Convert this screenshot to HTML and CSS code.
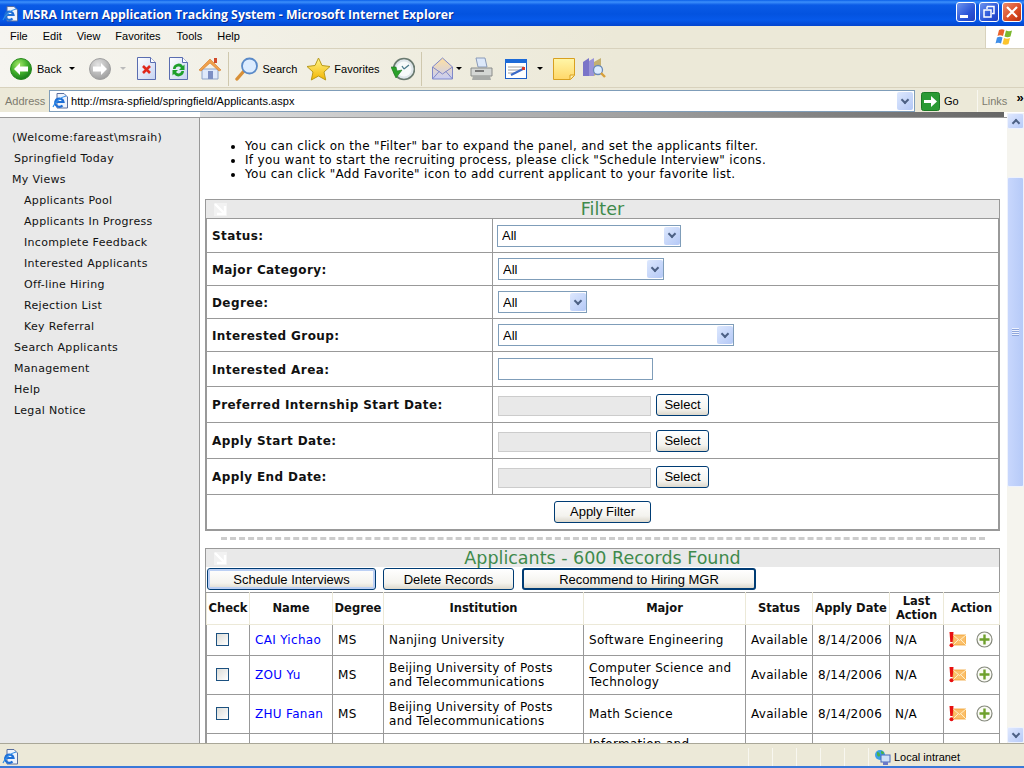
FILE: index.html
```html
<!DOCTYPE html>
<html lang="en">
<head>
    <meta charset="UTF-8">
    <title>MSRA Intern Application Tracking System - Microsoft Internet Explorer</title>
    <link rel="stylesheet" href="styles.css">
</head>
<body>
    <svg class="defs" width="0" height="0">
        <defs>
            <radialGradient id="gGreen" cx="40%" cy="30%" r="75%"><stop offset="0" stop-color="#a6e86a"/><stop offset="0.55" stop-color="#3fae2a"/><stop offset="1" stop-color="#12761a"/></radialGradient>
            <radialGradient id="gGray" cx="40%" cy="30%" r="75%"><stop offset="0" stop-color="#e4e4e4"/><stop offset="1" stop-color="#9a9a9a"/></radialGradient>
            <linearGradient id="gDoc" x1="0" y1="0" x2="1" y2="1"><stop offset="0" stop-color="#ffffff"/><stop offset="1" stop-color="#c6d3f2"/></linearGradient>
            <linearGradient id="gNote" x1="0" y1="0" x2="0" y2="1"><stop offset="0" stop-color="#fff6a8"/><stop offset="1" stop-color="#ffd76a"/></linearGradient>
            <linearGradient id="gStar" x1="0" y1="0" x2="0" y2="1"><stop offset="0" stop-color="#fff78c"/><stop offset="1" stop-color="#f4b400"/></linearGradient>
            <linearGradient id="gMail" x1="0" y1="0" x2="0" y2="1"><stop offset="0" stop-color="#ffe0a0"/><stop offset="1" stop-color="#c8cdf5"/></linearGradient>
            <symbol id="ie" viewBox="0 0 16 16">
                <path d="M5 .5h7l3.500 3.500v11H5z" fill="#eef3fc" stroke="#5a6f9e"/>
                <path d="M3.500 9h8A4.200 4.200 0 1 0 10.500 12.500" fill="none" stroke="#1f6fd6" stroke-width="2.200"/>
                <path d="M1 14C3 9 9 4 14 3" fill="none" stroke="#2c8be8" stroke-width="1.100"/>
            </symbol>
            <symbol id="warnmail" viewBox="0 0 18 17">
                <rect x="5" y="4" width="13" height="10" fill="#fbbf6a" stroke="#f0a030" stroke-width="0.800"/>
                <path d="M5 4l6.500 5.500L18 4M5 14l5-5M18 14l-5-5" fill="none" stroke="#fff0c8"/>
                <path d="M1.500 1h4l-.8 10H2.300z" fill="#e81010"/>
                <circle cx="3.500" cy="14.300" r="2" fill="#e81010"/>
            </symbol>
            <symbol id="plus" viewBox="0 0 17 17">
                <circle cx="8.500" cy="8.500" r="7.500" fill="#fbfbf6" stroke="#85897c" stroke-width="1.200"/>
                <path d="M8.500 3.500v10M3.500 8.500h10" stroke="#6ea02c" stroke-width="2.400"/>
            </symbol>
        </defs>
    </svg>

    <div class="window">
        <div class="titlebar">
            <svg class="title-icon" width="16" height="16"><use href="#ie"/></svg>
            <span class="title-text">MSRA Intern Application Tracking System - Microsoft Internet Explorer</span>
            <div class="win-buttons">
                <span class="win-btn"><span class="glyph-min"></span></span>
                <span class="win-btn">
                    <svg width="14" height="14" viewBox="0 0 14 14"><path d="M5 1.500h7v7H10M5 1.500V4M2 5h7v7H2z" fill="none" stroke="#fff" stroke-width="1.500"/></svg>
                </span>
                <span class="win-btn close">
                    <svg width="14" height="14" viewBox="0 0 14 14"><path d="M2 2l10 10M12 2L2 12" stroke="#fff" stroke-width="2.200"/></svg>
                </span>
            </div>
        </div>

        <div class="menubar">
            <span class="menu-file">File</span>
            <span class="menu-edit">Edit</span>
            <span class="menu-view">View</span>
            <span class="menu-fav">Favorites</span>
            <span class="menu-tools">Tools</span>
            <span class="menu-help">Help</span>
            <div class="flag">
                <svg width="20" height="18" viewBox="0 0 20 18">
                    <path d="M4 2c2-1 4-1 5.500 0L8 8C6 7 4 7 2.500 8z" fill="#e8622c"/>
                    <path d="M11 2.500c2 1 4 1 6 0L15.500 8.500c-2 1-4 1-6 0z" fill="#7cb82f"/>
                    <path d="M2 9.500c2-1 4-1 5.500 0L6 15.500c-2-1-4-1-5.500 0z" fill="#3f8ee8"/>
                    <path d="M9 10c2 1 4 1 6 0L13.500 16c-2 1-4 1-6 0z" fill="#fcc42c"/>
                </svg>
            </div>
        </div>

        <div class="toolbar">
            <svg class="ic-back" width="22" height="22" viewBox="0 0 22 22"><circle cx="11" cy="11" r="10.500" fill="url(#gGreen)" stroke="#2a8a20"/><path d="M4 11l6-6v3.500h8v5h-8V17z" fill="#fff"/></svg>
            <span class="tb-label label-back">Back</span>
            <span class="caret caret-back"></span>
            <svg class="ic-forward" width="22" height="22" viewBox="0 0 22 22"><circle cx="11" cy="11" r="10.500" fill="url(#gGray)" stroke="#a0a0a0"/><path d="M18 11l-6-6v3.500H4v5h8V17z" fill="#fff"/></svg>
            <span class="caret caret-forward"></span>
            <svg class="ic-stop" width="19" height="23" viewBox="0 0 19 23"><path d="M.5.500h13l5 5v17H.5z" fill="url(#gDoc)" stroke="#5a6db0"/><path d="M13.500.500v5h5" fill="#fff" stroke="#5a6db0"/><path d="M6 9l7 7M13 9l-7 7" stroke="#e0281c" stroke-width="2.600"/></svg>
            <svg class="ic-refresh" width="19" height="23" viewBox="0 0 19 23"><path d="M.5.500h13l5 5v17H.5z" fill="url(#gDoc)" stroke="#5a6db0"/><path d="M13.500.500v5h5" fill="#fff" stroke="#5a6db0"/><path d="M4 12a5.500 5.500 0 0 1 10-3l1.500-1.500V13H10l2-2a3 3 0 0 0-5.500 1zM15 14a5.500 5.500 0 0 1-10 3l-1.500 1.500V13H9l-2 2a3 3 0 0 0 5.500-1z" fill="#1fa02c"/></svg>
            <svg class="ic-home" width="24" height="24" viewBox="0 0 24 24"><path d="M4 12h16v10H4z" fill="#dfe9fb" stroke="#8ea4c8"/><path d="M1 13L12 2l11 11-2 1-9-8-9 8z" fill="#f0a04a" stroke="#d07a28" stroke-width="0.600"/><rect x="10" y="14" width="5" height="8" fill="#7c8fc4"/><rect x="16" y="1" width="3" height="5" fill="#d04a2a"/></svg>
            <span class="tb-sep sep-one"></span>
            <svg class="ic-search" width="24" height="24" viewBox="0 0 24 24"><path d="M9 14L2 22" stroke="#d89038" stroke-width="3.400" stroke-linecap="round"/><circle cx="14.500" cy="9" r="7.500" fill="#dcecff" stroke="#5a8ac8" stroke-width="1.800"/></svg>
            <span class="tb-label label-search">Search</span>
            <svg class="ic-star" width="25" height="24" viewBox="0 0 25 24"><path d="M12.500 1l3.500 7.500 8 1-6 5.500 1.700 8-7.200-4-7.200 4L7 15 1 9.500l8-1z" fill="url(#gStar)" stroke="#b89a1c"/></svg>
            <span class="tb-label label-fav">Favorites</span>
            <svg class="ic-history" width="24" height="24" viewBox="0 0 24 24"><circle cx="13" cy="12" r="10.500" fill="#dfe6ea" stroke="#6a7a70" stroke-width="1.600"/><circle cx="13" cy="12" r="7.500" fill="#f7fafa"/><path d="M13 12l5-4M13 12l-2-3" stroke="#4a7a8a" stroke-width="1.300"/><path d="M0 10h5l1 4 5-1-6 8z" fill="#2aa02a" stroke="#1c7a1c" stroke-width="0.600"/></svg>
            <span class="tb-sep sep-two"></span>
            <svg class="ic-mail" width="21" height="23" viewBox="0 0 21 23"><path d="M.5 10L10.500 1l10 9v12H.5z" fill="url(#gMail)" stroke="#8088c8"/><path d="M.5 10l10 7 10-7M.5 22l7-8M20.500 22l-7-8" fill="none" stroke="#8088c8"/></svg>
            <span class="caret caret-mail"></span>
            <svg class="ic-print" width="23" height="24" viewBox="0 0 23 24"><path d="M6 1h9l2 9H8z" fill="#dce8fa" stroke="#8a9ab8"/><path d="M1 11h21v8H1z" fill="#d4d6d4" stroke="#8a8c8a"/><path d="M3 19h17l1 4H2z" fill="#a8aaa8"/><rect x="5" y="13" width="9" height="2" fill="#777"/></svg>
            <svg class="ic-edit" width="22" height="20" viewBox="0 0 22 20"><rect x=".5" y=".5" width="21" height="19" fill="#fff" stroke="#1c5ec8"/><rect x="0" y="0" width="22" height="4" fill="#1c6ad8"/><path d="M3 8h16M3 11h12M3 14h8" stroke="#a0a0a0"/><path d="M6 16l12-6" stroke="#3a6ac8" stroke-width="2"/><rect x="17" y="8" width="3" height="3" fill="#d83a2a"/></svg>
            <span class="caret caret-edit"></span>
            <svg class="ic-note" width="22" height="22" viewBox="0 0 22 22"><path d="M.5.500h21v17l-4 4H.5z" fill="url(#gNote)" stroke="#d8a020"/><path d="M21 17h-4v4" fill="#fff0b0" stroke="#d8a020"/></svg>
            <svg class="ic-research" width="24" height="23" viewBox="0 0 24 23"><path d="M1 5l6-4v18H1z" fill="#7a74c8"/><path d="M7 4l5-3v18H7z" fill="#9a94d8"/><path d="M12 5l7-4v14l-7 4z" fill="#c4b070"/><circle cx="16" cy="13" r="4.500" fill="#dcecff" stroke="#6a8ab8" stroke-width="1.300"/><path d="M19 16l4 4" stroke="#d8a038" stroke-width="2.400"/></svg>
        </div>

        <div class="addressbar">
            <span class="address-label">Address</span>
            <div class="address-box">
                <svg class="address-icon" width="16" height="16"><use href="#ie"/></svg>
                <span class="address-url">http://msra-spfield/springfield/Applicants.aspx</span>
                <span class="drop-btn address-drop"><span class="chev"></span></span>
            </div>
            <svg class="go-icon" width="19" height="19" viewBox="0 0 19 19"><rect x=".5" y=".5" width="18" height="18" rx="2" fill="#2a9a34" stroke="#1c7a24"/><path d="M3 8h7V4l6 5.500-6 5.500v-4H3z" fill="#fff"/></svg>
            <span class="go-label">Go</span>
            <span class="links-label">Links</span>
            <span class="links-more">&raquo;</span>
        </div>

        <div class="viewport">
            <div class="view-left">
                <div class="band"></div>
                <div class="columns">
                    <nav class="sidebar">
                        <a class="nav-welcome">(Welcome:fareast\msraih)</a>
                        <a>Springfield Today</a>
                        <a class="nav-welcome">My Views</a>
                        <a class="nav-sub">Applicants Pool</a>
                        <a class="nav-sub">Applicants In Progress</a>
                        <a class="nav-sub">Incomplete Feedback</a>
                        <a class="nav-sub">Interested Applicants</a>
                        <a class="nav-sub">Off-line Hiring</a>
                        <a class="nav-sub">Rejection List</a>
                        <a class="nav-sub">Key Referral</a>
                        <a>Search Applicants</a>
                        <a>Management</a>
                        <a>Help</a>
                        <a>Legal Notice</a>
                    </nav>

                    <main class="page">
                        <ul class="tips">
                            <li>You can click on the "Filter" bar to expand the panel, and set the applicants filter.</li>
                            <li>If you want to start the recruiting process, please click "Schedule Interview" icons.</li>
                            <li>You can click "Add Favorite" icon to add current applicant to your favorite list.</li>
                        </ul>

                        <section class="panel">
                            <div class="panel-head">
                                <svg class="collapse-icon" width="13" height="13" viewBox="0 0 13 13"><rect width="13" height="13" fill="#f2f2f2"/><path d="M1 1l9 9M11 3v8H3" fill="none" stroke="#fff" stroke-width="2.400"/></svg>
                                <span>Filter</span>
                            </div>
                            <table class="filter-table">
                                <tr class="h34"><th>Status:</th><td><label class="select w-status"><select><option>All</option></select><span class="drop-btn"><span class="chev"></span></span></label></td></tr>
                                <tr class="h33"><th>Major Category:</th><td><label class="select w-major"><select><option>All</option></select><span class="drop-btn"><span class="chev"></span></span></label></td></tr>
                                <tr class="h33"><th>Degree:</th><td><label class="select w-degree"><select><option>All</option></select><span class="drop-btn"><span class="chev"></span></span></label></td></tr>
                                <tr class="h33"><th>Interested Group:</th><td><label class="select w-group"><select><option>All</option></select><span class="drop-btn"><span class="chev"></span></span></label></td></tr>
                                <tr class="h35"><th>Interested Area:</th><td><input class="text-input" type="text"></td></tr>
                                <tr class="h36"><th>Preferred Internship Start Date:</th><td><div class="date-field"><input class="date-input" type="text" disabled><button class="xp-btn btn-select">Select</button></div></td></tr>
                                <tr class="h36"><th>Apply Start Date:</th><td><div class="date-field"><input class="date-input" type="text" disabled><button class="xp-btn btn-select">Select</button></div></td></tr>
                                <tr class="h36"><th>Apply End Date:</th><td><div class="date-field"><input class="date-input" type="text" disabled><button class="xp-btn btn-select">Select</button></div></td></tr>
                                <tr class="h35"><td class="apply-cell" colspan="2"><button class="xp-btn btn-apply">Apply Filter</button></td></tr>
                            </table>
                        </section>

                        <div class="divider"></div>

                        <section class="panel">
                            <div class="panel-head">
                                <svg class="collapse-icon" width="13" height="13" viewBox="0 0 13 13"><rect width="13" height="13" fill="#f2f2f2"/><path d="M1 1l9 9M11 3v8H3" fill="none" stroke="#fff" stroke-width="2.400"/></svg>
                                <span>Applicants - 600 Records Found</span>
                            </div>
                            <div class="actions">
                                <button class="xp-btn btn-schedule">Schedule Interviews</button>
                                <button class="xp-btn btn-delete">Delete Records</button>
                                <button class="xp-btn btn-recommend">Recommend to Hiring MGR</button>
                            </div>
                            <table class="grid">
                                <colgroup>
                                    <col class="c-check"><col class="c-name"><col class="c-degree"><col class="c-inst"><col class="c-major"><col class="c-status"><col class="c-date"><col class="c-last"><col class="c-action">
                                </colgroup>
                                <thead>
                                    <tr><th>Check</th><th>Name</th><th>Degree</th><th>Institution</th><th>Major</th><th>Status</th><th>Apply Date</th><th>Last Action</th><th>Action</th></tr>
                                </thead>
                                <tbody>
                                    <tr class="r31">
                                        <td class="cell-check"><input type="checkbox"></td>
                                        <td><a class="name-link">CAI Yichao</a></td><td>MS</td><td class="cell-inst">Nanjing University</td><td>Software Engineering</td><td>Available</td><td>8/14/2006</td><td>N/A</td>
                                        <td class="cell-action"><svg width="18" height="17"><use href="#warnmail"/></svg><svg class="plus-icon" width="17" height="17"><use href="#plus"/></svg></td>
                                    </tr>
                                    <tr class="r39">
                                        <td class="cell-check"><input type="checkbox"></td>
                                        <td><a class="name-link">ZOU Yu</a></td><td>MS</td><td class="cell-inst">Beijing University of Posts and Telecommunications</td><td>Computer Science and Technology</td><td>Available</td><td>8/14/2006</td><td>N/A</td>
                                        <td class="cell-action"><svg width="18" height="17"><use href="#warnmail"/></svg><svg class="plus-icon" width="17" height="17"><use href="#plus"/></svg></td>
                                    </tr>
                                    <tr class="r39">
                                        <td class="cell-check"><input type="checkbox"></td>
                                        <td><a class="name-link">ZHU Fanan</a></td><td>MS</td><td class="cell-inst">Beijing University of Posts and Telecommunications</td><td>Math Science</td><td>Available</td><td>8/14/2006</td><td>N/A</td>
                                        <td class="cell-action"><svg width="18" height="17"><use href="#warnmail"/></svg><svg class="plus-icon" width="17" height="17"><use href="#plus"/></svg></td>
                                    </tr>
                                    <tr class="r50">
                                        <td></td><td></td><td></td><td></td><td>Information and Communication Engineering</td><td></td><td></td><td></td><td></td>
                                    </tr>
                                </tbody>
                            </table>
                        </section>
                    </main>
                </div>
            </div>

            <div class="scrollbar">
                <span class="sb-btn"><span class="chev chev-up"></span></span>
                <span class="sb-track sb-top"></span>
                <span class="sb-thumb"><span class="grip"></span></span>
                <span class="sb-track sb-rest"></span>
                <span class="sb-btn"><span class="chev"></span></span>
            </div>
        </div>

        <div class="statusbar">
            <svg class="status-ie" width="16" height="16"><use href="#ie"/></svg>
            <div class="status-cells">
                <span class="status-cell"></span><span class="status-cell"></span><span class="status-cell"></span><span class="status-cell"></span><span class="status-cell"></span>
            </div>
            <div class="status-zone">
                <svg width="17" height="17" viewBox="0 0 17 17"><circle cx="6" cy="6" r="5" fill="#3aa0e8"/><path d="M3 3c2 0 3 1 3 3S4 8 3 6zM7 2c2 0 3 1 3 2S8 6 7 4z" fill="#4ab04a"/><rect x="7" y="6" width="9" height="7" fill="#cfe0f8" stroke="#4a6ab8"/><rect x="9" y="13" width="5" height="3" fill="#6a7ac8"/></svg>
                <span>Local intranet</span>
            </div>
        </div>
    </div>
</body>
</html>
```
FILE: styles.css
```css
/* XP window chrome + page */
* {
    box-sizing: border-box;
}
html, body {
    margin: 0;
    padding: 0;
    height: 100%;
    overflow: hidden;
}
body {
    font-family: "DejaVu Sans", Verdana, sans-serif;
    font-size: 11px;
    color: #000;
    background-color: #fff;
}
.defs {
    position: absolute;
}
.window {
    display: flex;
    flex-direction: column;
    width: 1024px;
    height: 768px;
}

/* title bar */
.titlebar {
    display: flex;
    align-items: center;
    flex: 0 0 26px;
    padding: 2px 2px 0 2px;
    background: linear-gradient(#0a5fe8 0, #3c8ffb 2px, #0a5be6 5px, #0353e0 14px, #0659ea 20px, #0345cf 26px);
}
.title-text {
    margin-left: 4px;
    font-family: "Open Sans", sans-serif;
    font-weight: 700;
    font-size: 12.3px;
    color: #fff;
    text-shadow: 1px 1px 0 #0a2a90;
    white-space: nowrap;
}
.win-buttons {
    display: flex;
    align-self: flex-start;
    gap: 3px;
    margin: 0 0 0 auto;
}
.win-btn {
    display: flex;
    align-items: center;
    justify-content: center;
    width: 20px;
    height: 20px;
    border: 1px solid #fff;
    border-radius: 3px;
    background: linear-gradient(135deg, #6e94ee, #2a55d8 60%, #2040c0);
}
.win-btn.close {
    background: linear-gradient(135deg, #ec8a6c, #d94a22 60%, #b83010);
}
.glyph-min {
    align-self: flex-end;
    width: 8px;
    height: 3px;
    margin: 0 4px 3px 0;
    background-color: #fff;
}

/* menu */
.menubar {
    display: flex;
    align-items: center;
    flex: 0 0 23px;
    padding-bottom: 3px;
    border-bottom: 1px solid #d8d2bd;
    font-family: "Liberation Sans", Arial, sans-serif;
    font-size: 11px;
    background: linear-gradient(90deg, #f6f5f0, #ece9d8 60%);
}
.menu-file { margin-left: 10px; }
.menu-edit { margin-left: 15px; }
.menu-view { margin-left: 15px; }
.menu-fav { margin-left: 15px; }
.menu-tools { margin-left: 16px; }
.menu-help { margin-left: 15px; }
.flag {
    display: flex;
    align-items: center;
    justify-content: center;
    width: 39px;
    height: 22px;
    margin: 0 0 -3px auto;
    border-left: 1px solid #d8d2bd;
    background-color: #fff;
}

/* toolbar */
.toolbar {
    display: flex;
    align-items: center;
    flex: 0 0 39px;
    padding: 1px 0 0 10px;
    font-family: "Liberation Sans", Arial, sans-serif;
    font-size: 11px;
    border-bottom: 1px solid #d8d2bd;
    background: linear-gradient(90deg, #f6f5f0, #ece9d8 60%);
}
.tb-label { white-space: nowrap; }
.tb-sep {
    width: 1px;
    height: 34px;
    background-color: #cfc8ae;
}
.caret {
    width: 0;
    height: 0;
    border-left: 3px solid transparent;
    border-right: 3px solid transparent;
    border-top: 3px solid #000;
}
.label-back { margin-left: 5px; }
.caret-back { margin-left: 8px; }
.ic-forward { margin-left: 14px; }
.caret-forward { margin-left: 9px; border-top-color: #bbb; }
.ic-stop { margin-left: 11px; }
.ic-refresh { margin-left: 13px; }
.ic-home { margin-left: 10px; }
.sep-one { margin-left: 6px; }
.ic-search { margin-left: 6px; }
.label-search { margin-left: 3px; }
.ic-star { margin-left: 9px; }
.label-fav { margin-left: 3px; }
.ic-history { margin-left: 11px; }
.sep-two { margin-left: 6px; }
.ic-mail { margin-left: 10px; }
.caret-mail { margin-left: 3px; }
.ic-print { margin-left: 8px; }
.ic-edit { margin-left: 12px; }
.caret-edit { margin-left: 10px; }
.ic-note { margin-left: 10px; }
.ic-research { margin-left: 7px; }

/* address bar */
.addressbar {
    display: flex;
    align-items: center;
    flex: 0 0 24px;
    padding: 2px 0 0 5px;
    font-family: "Liberation Sans", Arial, sans-serif;
    font-size: 11px;
    background-color: #ece9d8;
}
.addressbar > * {
    flex-shrink: 0;
}
.address-label {
    width: 44px;
    color: #7d7b6e;
}
.address-box {
    display: flex;
    align-items: center;
    width: 866px;
    height: 22px;
    padding: 0 1px 0 2px;
    border: 1px solid #7f9db9;
    background-color: #fff;
}
.address-url {
    margin-left: 3px;
    letter-spacing: 0.06px;
}
.drop-btn {
    display: flex;
    align-items: center;
    justify-content: center;
    flex: 0 0 16px;
    width: 16px;
    height: 18px;
    border-radius: 2px;
    background: linear-gradient(135deg, #dde8fe, #b4c8f6);
}
.address-drop {
    margin-left: auto;
}
.chev {
    width: 6px;
    height: 6px;
    margin-top: -3px;
    border-right: 2px solid #4d6185;
    border-bottom: 2px solid #4d6185;
    transform: rotate(45deg);
}
.chev-up {
    margin-top: 3px;
    transform: rotate(225deg);
}
.go-icon {
    margin-left: 6px;
}
.go-label {
    margin-left: 4px;
}
.links-label {
    margin-left: 18px;
    padding-left: 4px;
    border-left: 1px solid #f8f7f0;
    line-height: 22px;
    color: #7d7b6e;
}
.links-more {
    margin: -8px 0 0 9px;
    font-size: 13px;
    font-weight: 700;
}

/* page area */
.viewport {
    display: flex;
    flex: 1;
    min-height: 0;
}
.view-left {
    display: flex;
    flex-direction: column;
    flex: 0 0 1007px;
    min-height: 0;
}
.band {
    flex: 0 0 6px;
    background: linear-gradient(90deg, #fff 0, #fff 200px, #e2e2e2 200px, #666 1004px, #fff 1004px);
    background-size: 100% 5px;
    background-repeat: no-repeat;
    border-bottom: 1px solid #999;
}
.columns {
    display: flex;
    flex: 1;
    min-height: 0;
    overflow: hidden;
}
.sidebar {
    display: flex;
    flex-direction: column;
    flex: 0 0 200px;
    padding: 9px 0 0 14px;
    border-right: 1px solid #999;
    background-color: #e9e9e9;
}
.sidebar a {
    line-height: 21px;
    letter-spacing: 0.32px;
    color: #111;
}
.sidebar a.nav-welcome { margin-left: -2px; }
.sidebar a.nav-sub { margin-left: 10px; }

.page {
    flex: 0 0 807px;
    padding: 0 7px 0 5px;
    overflow: hidden;
}
.tips {
    margin: 21px 0 18px;
    padding-left: 40px;
    line-height: 14px;
    font-size: 12px;
    letter-spacing: 0.3px;
}
.panel {
    border: 1px solid #999;
    border-bottom: none;
}
.panel-head {
    position: relative;
    height: 18px;
    text-align: center;
    font-size: 17.5px;
    line-height: 19px;
    color: #3f8a4c;
    background-color: #e9e9e9;
}
.collapse-icon {
    position: absolute;
    left: 8px;
    top: 3px;
}

/* filter */
.filter-table {
    width: 100%;
    border-collapse: collapse;
    table-layout: fixed;
    border: 1px solid #999;
    border-bottom-width: 2px;
}
.filter-table th, .filter-table td {
    padding: 0 5px;
    border: 1px solid #999;
    text-align: left;
}
.filter-table th {
    width: 286px;
    padding-top: 1px;
    font-size: 12px;
    font-weight: 700;
    letter-spacing: 0.4px;
    color: #111;
}
.h33 { height: 33px; }
.h34 { height: 34px; }
.h35 { height: 35px; }
.h36 { height: 36px; }
.select {
    position: relative;
    display: block;
    height: 22px;
}
.select select {
    appearance: none;
    display: block;
    width: 100%;
    height: 100%;
    padding-left: 4px;
    border: 1px solid #7f9db9;
    border-radius: 0;
    background-color: #fff;
    font-family: "Liberation Sans", Arial, sans-serif;
    font-size: 13px;
}
.select .drop-btn {
    position: absolute;
    right: 1px;
    top: 2px;
}
.w-status { width: 184px; margin-left: -1px; }
.w-major { width: 166px; }
.w-degree { width: 89px; }
.w-group { width: 236px; }
.text-input {
    display: block;
    width: 155px;
    height: 22px;
    border: 1px solid #7f9db9;
}
.date-field {
    display: flex;
    align-items: center;
    gap: 5px;
}
.date-input {
    width: 153px;
    height: 20px;
    margin-top: 3px;
    border: 1px solid #ccc;
    background-color: #e9e9e9;
}
.xp-btn {
    padding: 0;
    border: 1px solid #003c74;
    border-radius: 3px;
    background: linear-gradient(#fff, #f4f3ee 70%, #dcd8cc);
    font-family: "Liberation Sans", Arial, sans-serif;
    font-size: 13px;
    color: #000;
}
.btn-select {
    width: 53px;
    height: 22px;
}
.apply-cell {
    text-align: center !important;
}
.btn-apply {
    width: 97px;
    height: 22px;
}
.divider {
    height: 4px;
    margin: 6px 15px 7px 16px;
    border-top: 3px dashed #ccc;
}

/* applicants */
.actions {
    display: flex;
    align-items: center;
    height: 25px;
    padding: 0 0 0 1px;
}
.btn-schedule {
    width: 169px;
    height: 22px;
    box-shadow: inset 0 0 0 2px #bcd0f4;
}
.btn-delete {
    width: 131px;
    height: 22px;
    margin-left: 7px;
}
.btn-recommend {
    width: 234px;
    height: 22px;
    margin-left: 8px;
    border-width: 2px;
}
.grid {
    width: 100%;
    border-collapse: collapse;
    table-layout: fixed;
    border: 1px solid #999;
    font-size: 12px;
    letter-spacing: 0.3px;
}
.c-check { width: 43px; }
.c-name { width: 83px; }
.c-degree { width: 51px; }
.c-inst { width: 200px; }
.c-major { width: 162px; }
.c-status { width: 67px; }
.c-date { width: 77px; }
.c-last { width: 54px; }
.c-action { width: 56px; }
.grid th {
    height: 32px;
    padding: 0;
    border: 1px solid #ece9d8;
    border-top-color: #999;
    text-align: center;
    font-size: 11.5px;
    font-weight: 700;
    line-height: 14px;
    letter-spacing: 0;
    color: #111;
}
.grid td {
    padding: 0 5px;
    border: 1px solid #999;
    line-height: 14px;
    vertical-align: middle;
}
.grid td.cell-inst {
    padding-right: 14px;
}
.r31 { height: 31px; }
.r39 { height: 39px; }
.r50 { height: 50px; }
.name-link {
    color: #0000ff;
}
.cell-check {
    text-align: center;
}
.cell-check input {
    appearance: none;
    display: block;
    width: 13px;
    height: 13px;
    margin: 0 0 0 4px;
    border: 1px solid #1c5180;
    background: linear-gradient(135deg, #dcdcd7, #fff);
}
.grid td.cell-action {
    padding: 0 0 0 4px;
}
.cell-action svg {
    vertical-align: middle;
}
.plus-icon {
    margin-left: 10px;
}

/* scrollbar */
.scrollbar {
    display: flex;
    flex-direction: column;
    flex: 0 0 17px;
    margin-top: 1px;
    background-color: #f5f4ee;
}
.sb-btn {
    display: flex;
    align-items: center;
    justify-content: center;
    flex: 0 0 16px;
    border: 1px solid #eef2fd;
    border-radius: 2px;
    background: linear-gradient(135deg, #dfe8fe, #b8cbf8);
}
.sb-top {
    flex: 0 0 48px;
}
.sb-thumb {
    display: flex;
    align-items: center;
    justify-content: center;
    flex: 0 0 310px;
    border: 1px solid #eef2fd;
    border-radius: 2px;
    background: linear-gradient(90deg, #c8d7fd, #b6caf8);
}
.grip {
    width: 7px;
    height: 8px;
    background: repeating-linear-gradient(#eef2fd 0 1px, #8ea6dc 1px 2px);
}
.sb-rest {
    flex: 1;
}

/* status bar */
.statusbar {
    display: flex;
    align-items: center;
    flex: 0 0 22px;
    padding: 4px 0 0 2px;
    border-top: 1px solid #a9a798;
    border-bottom: 2px solid #3a78d8;
    font-family: "Liberation Sans", Arial, sans-serif;
    font-size: 11px;
    background-color: #ece9d8;
}
.status-cells {
    display: flex;
    margin-left: auto;
}
.status-cell {
    width: 24px;
    height: 18px;
    border-left: 1px solid #f8f7f0;
}
.status-zone {
    display: flex;
    align-items: center;
    gap: 3px;
    width: 156px;
    height: 18px;
    padding-left: 5px;
    border-left: 1px solid #f8f7f0;
}
```
